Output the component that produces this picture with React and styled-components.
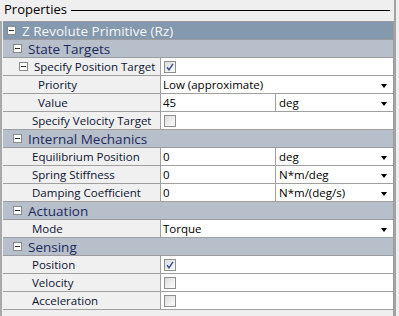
import styled, { createGlobalStyle } from "styled-components";

const GlobalStyle = createGlobalStyle`
  html, body {
    margin: 0;
    padding: 0;
    background: #efefef;
  }
  body {
    font-family: "Open Sans", "Noto Sans", sans-serif;
    font-size: 11.5px;
    color: #111;
  }
`;

const Panel = styled.div`
  width: 399px;
  height: 316px;
  box-sizing: border-box;
  overflow: hidden;
  position: relative;
`;

const Legend = styled.div`
  display: flex;
  align-items: center;
  height: 21px;
  padding: 0 9px 0 4px;
  box-sizing: border-box;
`;

const LegendText = styled.span`
  font-size: 13px;
  line-height: 19px;
  margin-top: -3px;
  color: #000;
`;

const LegendLine = styled.div`
  flex: 1;
  height: 1px;
  background: #000;
  margin-left: 4px;
  margin-top: -1px;
`;

const Frame = styled.div`
  display: flex;
`;

const LeftEdge = styled.div`
  width: 2px;
  margin-right: 1px;
  background: #a9a9a9;
`;

const Grid = styled.div`
  width: 390px;
  border: 1px solid #9c9ca0;
  border-right-width: 2px;
  border-left: none;
  border-bottom: none;
`;

const RightEdge = styled.div`
  width: 2px;
  background: #a3a3a3;
  position: absolute;
  right: 3px;
  top: 0;
  bottom: 0;
`;

const Header = styled.div`
  display: flex;
  align-items: center;
  height: 17px;
  border-bottom: 1px solid #9c9ca0;
  background: ${(p) => (p.$top ? "#8499ae" : "#b6bfca")};
  color: ${(p) => (p.$top ? "#f6f6f6" : "#1e2a5c")};
  padding-left: ${(p) => p.$indent}px;
  font-size: 13.5px;
`;

const Toggle = styled.span`
  display: inline-flex;
  align-items: center;
  justify-content: center;
  width: 7px;
  height: 7px;
  border: 1px solid #8a8a8a;
  background: #fff;
  margin-right: 6px;
  flex: none;

  &::after {
    content: "";
    width: 5px;
    height: 1px;
    background: #333;
  }
`;

const Row = styled.div`
  display: grid;
  grid-template-columns: 158px 1fr;
  height: 17px;
  border-bottom: 1px solid #a0a0a0;
`;

const Label = styled.div`
  display: flex;
  align-items: center;
  background: #f0f0f0;
  border-right: 1px solid #a0a0a0;
  padding-left: ${(p) => p.$indent}px;
  white-space: nowrap;
  overflow: hidden;
  color: #0c1230;
`;

const Value = styled.div`
  display: grid;
  grid-template-columns: ${(p) => (p.$split ? "114px 1fr" : "1fr")};
  background: #fff;
  min-width: 0;
`;

const Cell = styled.div`
  display: flex;
  align-items: center;
  padding-left: 2px;
  position: relative;
  white-space: nowrap;
  color: #000;
  & + & {
    border-left: 1px solid #a0a0a0;
    padding-left: 3px;
  }
`;

const Arrow = styled.span`
  position: absolute;
  right: 6px;
  top: 8px;
  width: 0;
  height: 0;
  border-left: 3.5px solid transparent;
  border-right: 3.5px solid transparent;
  border-top: 4px solid #000;
`;

const Box = styled.span`
  width: 10px;
  height: 10px;
  margin-left: 1px;
  border: 1px solid #8e8f8f;
  background: linear-gradient(135deg, #dcdcdc 0%, #f4f4f4 70%, #fafafa 100%);
  display: flex;
  align-items: center;
  justify-content: center;
`;

const Check = ({ on }) => (
  <Box>
    {on && (
      <svg width="8" height="8" viewBox="0 0 8 8">
        <path d="M1 4.2 L3 6.8 L7 0.8" fill="none" stroke="#3b4f93" strokeWidth="1.5" />
      </svg>
    )}
  </Box>
);

const Select = ({ children }) => (
  <Cell>
    {children}
    <Arrow />
  </Cell>
);

const Bottom = styled.div`
  height: 7px;
`;

export default function App() {
  return (
    <>
      <GlobalStyle />
      <Panel>
        <Legend>
          <LegendText>Properties</LegendText>
          <LegendLine />
        </Legend>
        <Frame>
          <LeftEdge />
          <Grid>
            <Header $top $indent={4}>
              <Toggle />Z Revolute Primitive (Rz)
            </Header>
            <Header $indent={10}>
              <Toggle />State Targets
            </Header>
            <Row>
              <Label $indent={16}><Toggle />Specify Position Target</Label>
              <Value><Cell><Check on /></Cell></Value>
            </Row>
            <Row>
              <Label $indent={35}>Priority</Label>
              <Value><Select>Low (approximate)</Select></Value>
            </Row>
            <Row>
              <Label $indent={35}>Value</Label>
              <Value $split><Cell>45</Cell><Select>deg</Select></Value>
            </Row>
            <Row>
              <Label $indent={29}>Specify Velocity Target</Label>
              <Value><Cell><Check /></Cell></Value>
            </Row>
            <Header $indent={10}>
              <Toggle />Internal Mechanics
            </Header>
            <Row>
              <Label $indent={29}>Equilibrium Position</Label>
              <Value $split><Cell>0</Cell><Select>deg</Select></Value>
            </Row>
            <Row>
              <Label $indent={29}>Spring Stiffness</Label>
              <Value $split><Cell>0</Cell><Select>N*m/deg</Select></Value>
            </Row>
            <Row>
              <Label $indent={29}>Damping Coefficient</Label>
              <Value $split><Cell>0</Cell><Select>N*m/(deg/s)</Select></Value>
            </Row>
            <Header $indent={10}>
              <Toggle />Actuation
            </Header>
            <Row>
              <Label $indent={29}>Mode</Label>
              <Value><Select>Torque</Select></Value>
            </Row>
            <Header $indent={10}>
              <Toggle />Sensing
            </Header>
            <Row>
              <Label $indent={29}>Position</Label>
              <Value><Cell><Check on /></Cell></Value>
            </Row>
            <Row>
              <Label $indent={29}>Velocity</Label>
              <Value><Cell><Check /></Cell></Value>
            </Row>
            <Row>
              <Label $indent={29}>Acceleration</Label>
              <Value><Cell><Check /></Cell></Value>
            </Row>
            <Bottom />
          </Grid>
        </Frame>
        <RightEdge />
      </Panel>
    </>
  );
}
